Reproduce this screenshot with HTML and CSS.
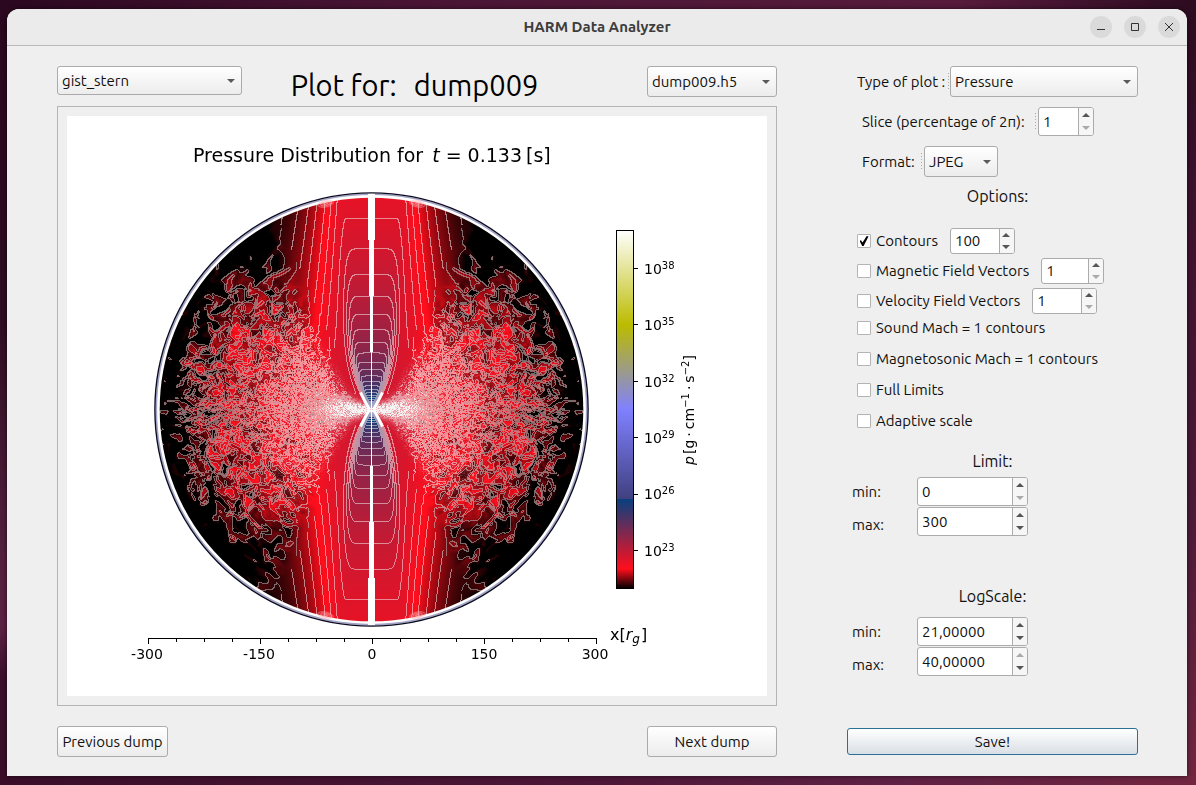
FILE: index.html
```html
<!DOCTYPE html>
<html lang="en">
<head>
<meta charset="utf-8">
<title>HARM Data Analyzer</title>
<meta name="viewport" content="width=device-width, initial-scale=1">
<link rel="stylesheet" href="styles.css">
</head>
<body>
<div class="window">
  <header class="titlebar">
    <h1 class="titlebar-name">HARM Data Analyzer</h1>
    <div class="titlebar-buttons">
      <button class="winbtn" type="button" aria-label="Minimize"><svg viewBox="0 0 22 22"><path d="M7 13.5h8"/></svg></button>
      <button class="winbtn" type="button" aria-label="Maximize"><svg viewBox="0 0 22 22"><path d="M7.5 7.5h7v7h-7z"/></svg></button>
      <button class="winbtn" type="button" aria-label="Close"><svg viewBox="0 0 22 22"><path d="M7 7l8 8M15 7l-8 8"/></svg></button>
    </div>
  </header>
  <main class="content">
    <section class="viewer">
      <div class="viewer-head">
        <span class="select select-map"><select aria-label="Colour map"><option>gist_stern</option></select></span>
        <h2 class="plot-for"><span>Plot for:</span><span>dump009</span></h2>
        <span class="select select-dump"><select aria-label="Dump file"><option>dump009.h5</option></select></span>
      </div>
      <figure class="frame">
        <div class="plot">
          <canvas class="plot-field" id="field" width="700" height="580"></canvas>
          <svg class="plot-axes" viewBox="0 0 700 580" role="img" aria-label="Pressure distribution">
            <defs>
              <linearGradient id="stern" x1="0" y1="1" x2="0" y2="0">
                <stop offset="0" stop-color="#000"/>
                <stop offset=".0547" stop-color="#ff0e1c"/>
                <stop offset=".25" stop-color="#074080"/>
                <stop offset=".25" stop-color="#404080"/>
                <stop offset=".5" stop-color="#8080ff"/>
                <stop offset=".735" stop-color="#bbbb00"/>
                <stop offset="1" stop-color="#fff"/>
              </linearGradient>
            </defs>
            <text class="t-title" x="126" y="46">Pressure Distribution for <tspan class="it" dx="3">t</tspan><tspan dx="6">=</tspan><tspan dx="6">0.133</tspan><tspan dx="4">[s]</tspan></text>
            <rect class="bar" x="549.5" y="114.5" width="17" height="358" fill="url(#stern)"/>
            <path class="line" d="M567 152.5h4M567 208.5h4M567 265.5h4M567 321.5h4M567 378.5h4M567 434.5h4"/>
            <g class="t-tick">
              <text x="577" y="158">10<tspan class="sup" dy="-5">38</tspan></text>
              <text x="577" y="214">10<tspan class="sup" dy="-5">35</tspan></text>
              <text x="577" y="271">10<tspan class="sup" dy="-5">32</tspan></text>
              <text x="577" y="327">10<tspan class="sup" dy="-5">29</tspan></text>
              <text x="577" y="383">10<tspan class="sup" dy="-5">26</tspan></text>
              <text x="577" y="440">10<tspan class="sup" dy="-5">23</tspan></text>
            </g>
            <text class="t-tick mid" transform="translate(627 294) rotate(-90)"><tspan class="it">p</tspan><tspan dx="2">[g</tspan><tspan dx="3">·</tspan><tspan dx="3">cm</tspan><tspan class="sup" dy="-5">−1</tspan><tspan dx="3" dy="5">·</tspan><tspan dx="3">s</tspan><tspan class="sup" dy="-5">−2</tspan><tspan dy="5">]</tspan></text>
            <path class="line" d="M81 522.5h449M81.5 522v6M193.500 522v6M305.500 522v6M417.500 522v6M529.500 522v6M109.500 522v4M137.500 522v4M165.500 522v4M221.500 522v4M249.500 522v4M277.500 522v4M333.500 522v4M361.500 522v4M389.500 522v4M445.500 522v4M473.500 522v4M501.500 522v4"/>
            <g class="t-tick mid">
              <text x="80" y="543">-300</text>
              <text x="192" y="543">-150</text>
              <text x="305" y="543">0</text>
              <text x="417" y="543">150</text>
              <text x="528" y="543">300</text>
            </g>
            <text class="t-axis" x="543" y="524">x[<tspan class="it">r</tspan><tspan class="sub it" dy="3">g</tspan><tspan dx="1" dy="-3">]</tspan></text>
          </svg>
        </div>
      </figure>
    </section>

    <section class="settings">
      <div class="setting setting-type">
        <label for="type">Type of plot :</label><span class="grip"></span>
        <span class="select grow"><select id="type"><option>Pressure</option></select></span>
      </div>
      <div class="setting setting-slice">
        <label for="slice">Slice (percentage of 2π):</label><span class="grip"></span>
        <span class="spin spin-56"><input id="slice" type="text" value="1" inputmode="numeric"><button class="up" type="button" aria-label="Increase"></button><button class="down" type="button" aria-label="Decrease" disabled></button></span>
      </div>
      <div class="setting setting-format">
        <label for="format">Format:</label><span class="grip"></span>
        <span class="select select-format"><select id="format"><option>JPEG</option></select></span>
      </div>

      <h3 class="heading">Options:</h3>
      <div class="counted">
        <div class="counted-row">
          <label class="check"><input type="checkbox" checked>Contours</label>
          <span class="spin spin-65"><input type="text" value="100" inputmode="numeric" aria-label="Number of contours"><button class="up" type="button" aria-label="Increase"></button><button class="down" type="button" aria-label="Decrease"></button></span>
        </div>
        <div class="counted-row">
          <label class="check"><input type="checkbox">Magnetic Field Vectors</label>
          <span class="spin spin-63"><input type="text" value="1" inputmode="numeric" aria-label="Magnetic vector density"><button class="up" type="button" aria-label="Increase"></button><button class="down" type="button" aria-label="Decrease" disabled></button></span>
        </div>
        <div class="counted-row">
          <label class="check"><input type="checkbox">Velocity Field Vectors</label>
          <span class="spin spin-65"><input type="text" value="1" inputmode="numeric" aria-label="Velocity vector density"><button class="up" type="button" aria-label="Increase"></button><button class="down" type="button" aria-label="Decrease" disabled></button></span>
        </div>
      </div>
      <div class="checks">
        <label class="check"><input type="checkbox">Sound Mach = 1 contours</label>
        <label class="check"><input type="checkbox">Magnetosonic Mach = 1 contours</label>
        <label class="check"><input type="checkbox">Full Limits</label>
        <label class="check"><input type="checkbox">Adaptive scale</label>
      </div>

      <h3 class="heading heading-limit">Limit:</h3>
      <div class="range">
        <div class="range-labels"><label for="lmin">min:</label><label for="lmax">max:</label></div>
        <div class="range-fields">
          <span class="spin"><input id="lmin" type="text" value="0" inputmode="numeric"><button class="up" type="button" aria-label="Increase"></button><button class="down" type="button" aria-label="Decrease" disabled></button></span>
          <span class="spin"><input id="lmax" type="text" value="300" inputmode="numeric"><button class="up" type="button" aria-label="Increase"></button><button class="down" type="button" aria-label="Decrease"></button></span>
        </div>
      </div>

      <h3 class="heading heading-log">LogScale:</h3>
      <div class="range range-log">
        <div class="range-labels"><label for="smin">min:</label><label for="smax">max:</label></div>
        <div class="range-fields">
          <span class="spin"><input id="smin" type="text" value="21,00000" inputmode="decimal"><button class="up" type="button" aria-label="Increase"></button><button class="down" type="button" aria-label="Decrease"></button></span>
          <span class="spin"><input id="smax" type="text" value="40,00000" inputmode="decimal"><button class="up" type="button" aria-label="Increase" disabled></button><button class="down" type="button" aria-label="Decrease"></button></span>
        </div>
      </div>
    </section>

    <nav class="pager">
      <button class="btn btn-prev" type="button">Previous dump</button>
      <button class="btn btn-next" type="button">Next dump</button>
    </nav>
    <button class="btn btn-save" type="button">Save!</button>
  </main>
</div>
<script src="field.js"></script>
</body>
</html>
```

FILE: styles.css
```css
* { box-sizing: border-box; }

body {
  margin: 0;
  min-height: 100vh;
  display: flex;
  padding: 9px 9px 9px 7px;
  font: 15px/20px Ubuntu, "Noto Sans", sans-serif;
  color: #111;
  background:
    linear-gradient(90deg, #2c0720 0%, #4a1535 35%, #571b3c 80%, #2d0b20 100%) top / 100% 9px no-repeat,
    linear-gradient(90deg, #3a0e2a 0%, #4d1738 50%, #5f2145 75%, #722640 100%) bottom / 100% 9px no-repeat,
    linear-gradient(180deg, #2c0720 0%, #2e0c22 40%, #54203f 70%, #5c2245 80%, #3d0f2d 86%, #3a0e2a 100%) left / 7px 100% no-repeat,
    linear-gradient(180deg, #2d0b20 0%, #3f1330 30%, #4b1a38 65%, #722640 100%);
}

h1, h2, h3, figure { margin: 0; font-weight: 400; }
button, input, select { font: inherit; color: inherit; margin: 0; }

.window {
  flex: 1;
  display: flex;
  flex-direction: column;
  border-radius: 12px 12px 0 0;
  overflow: hidden;
  background: #efefef;
  box-shadow: 0 0 5px #0009;
}

.titlebar {
  display: grid;
  grid-template-columns: 1fr auto 1fr;
  align-items: center;
  height: 37px;
  padding: 0 7px;
  background: #ebebeb;
  border-bottom: 1px solid #b9b9b9;
}
.titlebar-name { grid-column: 2; font-size: 15px; font-weight: 700; color: #3d3d3d; }
.titlebar-buttons { display: flex; justify-content: flex-end; gap: 12px; }
.winbtn { width: 22px; height: 22px; padding: 0; border: 0; border-radius: 50%; background: #dadada; }
.winbtn svg { display: block; fill: none; stroke: #333; }

.content {
  flex: 1;
  display: grid;
  grid-template-columns: minmax(0, 720fr) minmax(0, 291fr);
  grid-template-rows: auto auto;
  align-content: start;
  gap: 20px 70px;
  padding: 20px 49px 19px 50px;
}

.viewer-head { display: flex; justify-content: space-between; align-items: flex-start; height: 40px; }
.plot-for { display: flex; gap: 17px; font-size: 29px; line-height: 38px; color: #000; margin-right: 60px; }
.frame { padding: 9px; border: 1px solid #b4b4b4; }
.plot { position: relative; aspect-ratio: 700 / 580; background: #fff; }
.plot-field, .plot-axes { position: absolute; inset: 0; width: 100%; height: 100%; }

.plot-axes { font-family: "DejaVu Sans", sans-serif; fill: #000; }
.t-title { font-size: 19px; }
.t-tick { font-size: 14px; }
.t-axis { font-size: 16px; }
.mid { text-anchor: middle; }
.it { font-style: italic; }
.sup, .sub { font-size: 10px; }
.t-axis .sub { font-size: 12px; }
.line { stroke: #000; fill: none; }
.bar { stroke: #000; }

.select { position: relative; display: block; }
.select select {
  display: block;
  width: 100%;
  height: 31px;
  padding: 0 20px 0 4px;
  appearance: none;
  border: 1px solid #ababab;
  border-radius: 3px;
  background: linear-gradient(#fff, #ececec);
}
.select::after {
  content: "";
  position: absolute;
  right: 7px;
  top: 50%;
  margin-top: -2px;
  border: 4px solid transparent;
  border-top-color: #5a5a5a;
  border-bottom: 0;
}
.select-map { width: 185px; }
.select-map select { height: 29px; }
.select-dump { width: 130px; }
.select-format { width: 74px; }
.grow { flex: 1; }

.btn { height: 31px; padding: 0 4px; border: 1px solid #ababab; border-radius: 3px; background: linear-gradient(#fff, #ececec); }
.pager { display: flex; justify-content: space-between; }
.btn-prev { min-width: 111px; }
.btn-next { width: 130px; }
.btn-save { align-self: center; height: 27px; border-color: #2b7196; background: linear-gradient(#fff, #d9dfe5); }

.settings { display: flex; flex-direction: column; }
.setting { display: flex; align-items: center; margin-bottom: 10px; padding-left: 15px; }
.setting-type { padding-left: 10px; }
.setting-type label { width: 91px; }
.setting-slice label { width: 173px; }
.setting-format label { width: 59px; }
.setting-format { margin-bottom: 9px; }
.setting label { white-space: nowrap; }
.grip { width: 1px; height: 17px; margin-right: 2px; background: repeating-linear-gradient(#aaa 0 1px, transparent 1px 3px); }
.setting-type .grip { margin-right: 1px; }

.heading { font-size: 16px; text-align: center; padding-left: 10px; }
.heading-limit, .heading-log { padding-left: 0; }
.counted { display: flex; flex-direction: column; gap: 4px; margin-top: 22px; padding-left: 10px; }
.counted-row { display: flex; align-items: center; gap: 12px; }
.counted-row .spin { height: 26px; }
.checks { display: flex; flex-direction: column; gap: 11px; margin: 4px 0 20px; padding-left: 10px; }
.check { display: flex; align-items: center; gap: 5px; white-space: nowrap; }
.check input { appearance: none; width: 14px; height: 14px; border: 1px solid #b4b4b4; border-radius: 1px; background: #fff; }
.check input:checked { display: grid; place-items: center; }
.check input:checked::before {
  content: "";
  width: 9px;
  height: 10px;
  background: #000;
  clip-path: polygon(0 48%, 16% 42%, 34% 66%, 80% 0, 100% 6%, 46% 100%, 30% 100%);
}

.spin {
  display: grid;
  grid-template: 1fr 1fr / 1fr 14px;
  width: 111px;
  height: 29px;
  border: 1px solid #ababab;
  border-radius: 3px;
  background: #fff;
  overflow: hidden;
}
.spin input { grid-row: 1 / 3; width: 100%; min-width: 0; padding: 0 0 0 4px; border: 0; border-right: 1px solid #ababab; background: none; outline: 0; }
.spin button { display: grid; place-items: center; padding: 0 1px 0 0; border: 0; background: #f6f6f6; }
.spin button::before { content: ""; border: 4px solid transparent; }
.spin .up::before { border-top: 0; border-bottom-color: #555; }
.spin .down::before { border-bottom: 0; border-top-color: #555; }
.spin .up:disabled::before { border-bottom-color: #aaa; }
.spin .down:disabled::before { border-top-color: #aaa; }
.spin-56 { width: 56px; }
.spin-63 { width: 63px; }
.spin-65 { width: 65px; }

.range { display: flex; margin: 6px 0 47px; padding-left: 5px; }
.range-log { margin: 11px 0 0; }
.range-labels { display: flex; flex-direction: column; gap: 4px; width: 65px; line-height: 29px; }
.range-fields { display: flex; flex-direction: column; gap: 1px; }
```

FILE: field.js
```js
// Draws the meridional pressure map: a colour-mapped field with contour lines.
const canvas = document.getElementById("field");
const ctx = canvas.getContext("2d");
const CX = 304, CY = 293, R = 213;

function mix(a, b, t) { return a + (b - a) * t; }
function step(a, b, x) { const t = Math.min(1, Math.max(0, (x - a) / (b - a))); return t * t * (3 - 2 * t); }
function hash(x, y, s) {
  let h = Math.imul(x, 374761393) + Math.imul(y, 668265263) + Math.imul(s, 2147483647 - 1013);
  h = Math.imul(h ^ (h >>> 13), 1274126177);
  h = Math.imul(h ^ (h >>> 16), 2246822519);
  return ((h ^ (h >>> 15)) >>> 0) / 4294967296;
}
function noise(x, y, s) {
  const i = Math.floor(x), j = Math.floor(y);
  const u = step(0, 1, x - i), v = step(0, 1, y - j);
  return mix(mix(hash(i, j, s), hash(i + 1, j, s), u), mix(hash(i, j + 1, s), hash(i + 1, j + 1, s), u), v) * 2 - 1;
}

// gist_stern colour map
function stern(v) {
  v = Math.min(1, Math.max(0, v));
  const r = v < 0.0547 ? v / 0.0547 : v < 0.25 ? mix(1, 0.027, (v - 0.0547) / 0.1953) : v;
  const b = v < 0.5 ? 2 * v : v < 0.735 ? 1 - (v - 0.5) / 0.235 : (v - 0.735) / 0.265;
  return [r * 255, v * 255, b * 255];
}

const KEYS = [[0, 0.082], [26, 0.079], [34, 0.07], [40, 0.06], [46, 0.05], [62, 0.03], [78, 0.014], [98, 0.003], [220, -0.01]];
function outside(x) {
  for (let k = 1; k < KEYS.length; k++) {
    if (x < KEYS[k][0]) {
      const a = KEYS[k - 1], b = KEYS[k];
      return mix(a[1], b[1], (x - a[0]) / (b[0] - a[0]));
    }
  }
  return -0.012;
}

function value(x, y) {
  const ax = Math.abs(x), ay = Math.abs(y) + 0.5, r = Math.hypot(ax, ay);
  const wall = 28 * (1 - Math.exp(-ay / 42));
  const axis = 0.0795 + 0.0574 * Math.log(193 / ay);
  const near = 1 + 0.42 * (1 - ay / 213);
  const side = outside(ax / near) + 0.012 * Math.exp(-ay / 60);
  const f = 1 / (1 + Math.pow(ax / wall, 10));
  const smooth = mix(Math.min(side, 0.09), axis, f);
  const edge = ax - 0.44 * ay - 12;
  const rough = step(-2, 30, edge);
  if (rough === 0) return smooth;

  const lat = Math.atan2(y, ax);
  const u = Math.log(r) * 29;
  const t = 30 * Math.sign(lat) * Math.pow(Math.abs(lat), 0.64);
  // Low-frequency warp turns the lattice cells into irregular islands
  const wu = u + 0.9 * noise(u * 0.7, t * 0.7, 14);
  const wt = t + 0.9 * noise(u * 0.7, t * 0.7, 27);
  const fine = 1 - 0.5 * step(0.2, 0.8, Math.abs(lat));
  const n = noise(wu, wt, 3) * 0.85 + noise(wu * 2.2, wt * 2.2, 9) * 0.5 * fine + noise(u * 0.4, t * 0.4, 5) * 0.4;
  const polar = step(0.45, 0.95, Math.abs(lat));
  const mean = 0.054 - 0.015 * step(80, 150, r) - 0.022 * step(135, 185, r) - 0.024 * step(180, 206, r)
    + 0.004 * polar * step(150, 180, r) - 0.012 * polar * step(90, 140, r);
  const amp = mix(0.026, 0.031, step(90, 150, r)) * mix(1, 0.75, step(185, 208, r));
  return mix(smooth, mean, step(5, 45, edge)) + n * amp * rough;
}

const W = canvas.width, H = canvas.height;
const image = ctx.createImageData(W, H);
const HALF = R + 2;
const level = v => Math.max(0, Math.floor(v * 100));
const coarse = v => Math.max(0, Math.floor(v * 62 + 0.35));
// The field is symmetric about the axis, so one half is sampled and mirrored.
for (let y = -R; y <= R; y++) {
  for (let x = 0; x < HALF; x++) {
    const r = Math.hypot(x, y);
    if (r > R) continue;
    const v = value(x, y), vx = value(x + 1, y), vy = value(x, y + 1);
    const q = x - 0.44 * Math.abs(y) - 10 > 0 ? coarse : level;
    const crossed = q(v) !== q(vx) || q(v) !== q(vy);
    let a = crossed ? (q === level ? 0.52 : 0.58) : 0;
    const spread = Math.abs(y) / (x * 0.34 + 3);
    const glow = Math.exp(-spread * spread) * (1 - step(10, 90, r));
    a = Math.max(a, Math.min(1, glow * (0.6 + 1.1 * hash(x, y, 21))));
    const haze = (1 - step(30, 150, r)) * step(0, 25, x - 0.6 * Math.abs(y) - 5);
    a = Math.max(a, haze * Math.pow(hash(x, y, 33), 2.2));
    const white = mix(245, 180, step(80, 150, r) * (q === coarse ? 1 : 0));
    const c = stern(v);
    for (const px of [CX + x, CX - x]) {
      const o = ((CY + y) * W + px) * 4;
      for (let k = 0; k < 3; k++) image.data[o + k] = mix(c[k], white, a);
      image.data[o + 3] = 255;
    }
  }
}
ctx.putImageData(image, 0, 0);

function ring(radius, width, color) {
  ctx.beginPath();
  ctx.arc(CX + 0.5, CY + 0.5, radius, 0, Math.PI * 2);
  ctx.lineWidth = width;
  ctx.strokeStyle = color;
  ctx.stroke();
}
ring(213.2, 2.8, "#fff");
ring(215.2, 1.6, "#a4a4c8");

// Shock spots close to the outer boundary
for (const sx of [-1, 1]) for (const sy of [-1, 1]) {
  for (const s of [8, 5, 2]) {
    ctx.beginPath();
    ctx.ellipse(CX + 0.5 + sx * 46, CY + 0.5 + sy * 206, s, s * 0.45, sx * -sy * 0.2, 0, Math.PI * 2);
    ctx.fillStyle = "rgba(245,130,140,.25)";
    ctx.strokeStyle = "rgba(255,220,220,.5)";
    ctx.lineWidth = 0.7;
    ctx.fill();
    ctx.stroke();
  }
}

// Excised polar axis, widening outwards
ctx.fillStyle = "#fff";
ctx.fillRect(CX, CY - 57, 1, 114);
for (const [w, from, to] of [[3, 57, 113], [5, 113, 169], [7, 169, 216]]) {
  ctx.fillRect(CX - (w - 1) / 2, CY - to, w, to - from);
  ctx.fillRect(CX - (w - 1) / 2, CY + from, w, to - from);
}
ring(216.6, 1.4, "#0b0b22");

// Jet base
ctx.strokeStyle = "#fff";
ctx.lineCap = "butt";
for (const sx of [-1, 1]) for (const sy of [-1, 1]) {
  ctx.beginPath();
  ctx.lineWidth = 3;
  ctx.moveTo(CX + 0.5 + sx * 2, CY + 0.5);
  ctx.lineTo(CX + 0.5 + sx * 7, CY + 0.5 + sy * 9);
  ctx.lineTo(CX + 0.5 + sx * 11, CY + 0.5 + sy * 17);
  ctx.stroke();
}
```
